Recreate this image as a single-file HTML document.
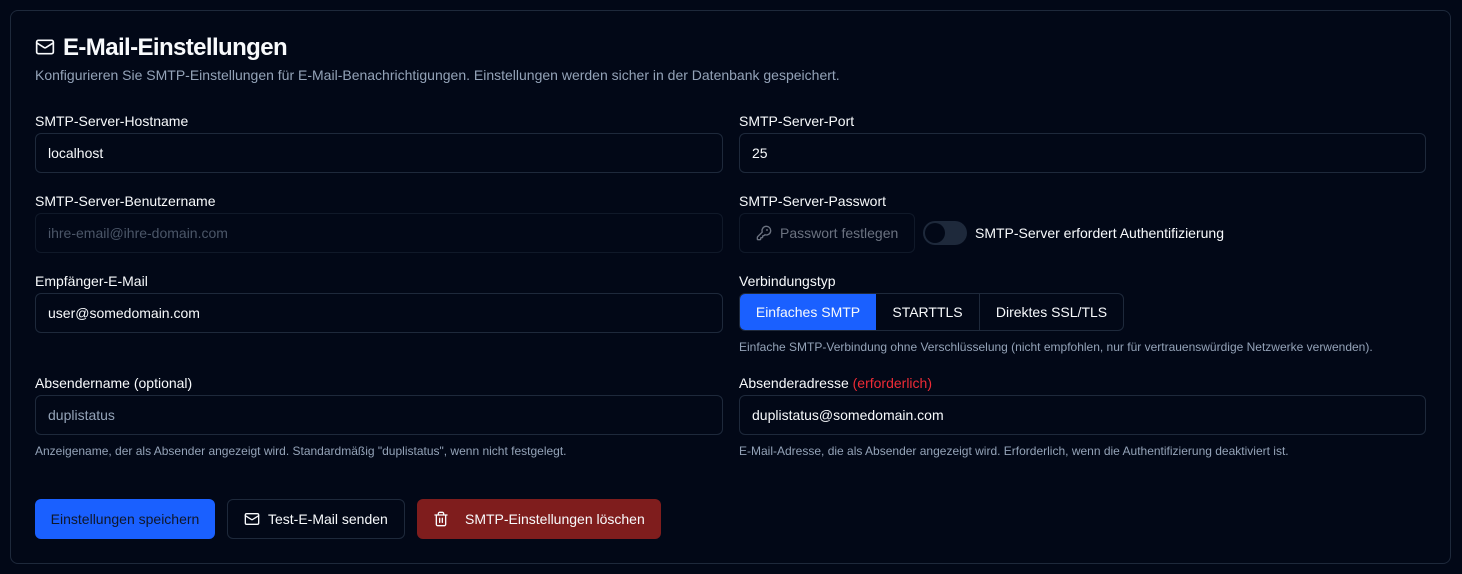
<!DOCTYPE html>
<html lang="de">
<head>
<meta charset="utf-8">
<title>E-Mail-Einstellungen</title>
<style>
*{box-sizing:border-box;margin:0;padding:0}
html,body{width:1462px;height:574px;background:#020817;overflow:hidden}
body{position:relative;font-family:"Liberation Sans",sans-serif;color:#f8fafc;font-size:14px;line-height:20px}
.a{position:absolute;white-space:nowrap}
.card{position:absolute;left:10px;top:10px;width:1441px;height:554px;border:1px solid #1e293b;border-radius:8px;background:#020817}
.in{position:absolute;height:40px;border:1px solid #1e293b;border-radius:6px;background:#020817;padding:9px 12px;white-space:nowrap}
.dis{border-color:#101929}
.w1{left:35px;width:688px}
.w2{left:739px;width:687px}
.h{font-size:12px;line-height:16px;color:#94a3b8}
.m{color:#94a3b8}
svg{position:absolute;fill:none;stroke:currentColor;stroke-width:2;stroke-linecap:round;stroke-linejoin:round}
.btn{position:absolute;top:499px;height:40px;border-radius:6px;text-align:center;line-height:40px;white-space:nowrap}
</style>
</head>
<body>
<div class="card"></div>

<svg style="left:35px;top:37px;color:#f8fafc" width="20" height="20" viewBox="0 0 24 24"><rect x="2" y="4" width="20" height="16" rx="2"/><path d="m22 7-8.97 5.7a1.94 1.94 0 0 1-2.06 0L2 7"/></svg>
<div class="a" style="left:63px;top:32px;font-size:24px;line-height:32px;font-weight:700;letter-spacing:-0.6px">E-Mail-Einstellungen</div>
<div class="a m" style="left:35px;top:65px">Konfigurieren Sie SMTP-Einstellungen für E-Mail-Benachrichtigungen. Einstellungen werden sicher in der Datenbank gespeichert.</div>

<div class="a" style="left:35px;top:111px">SMTP-Server-Hostname</div>
<div class="in w1" style="top:133px">localhost</div>
<div class="a" style="left:739px;top:111px">SMTP-Server-Port</div>
<div class="in w2" style="top:133px">25</div>

<div class="a" style="left:35px;top:191px">SMTP-Server-Benutzername</div>
<div class="in w1 dis" style="top:213px;color:#4b5668">ihre-email@ihre-domain.com</div>
<div class="a" style="left:739px;top:191px">SMTP-Server-Passwort</div>
<div class="in dis" style="left:739px;top:213px;width:176px"></div>
<svg style="left:756px;top:225px;color:#6b7280" width="16" height="16" viewBox="0 0 24 24"><path d="M2.586 17.414A2 2 0 0 0 2 18.828V21a1 1 0 0 0 1 1h3a1 1 0 0 0 1-1v-1a1 1 0 0 1 1-1h1a1 1 0 0 0 1-1v-1a1 1 0 0 1 1-1h.172a2 2 0 0 0 1.414-.586l.814-.814a6.5 6.5 0 1 0-4-4z"/><circle cx="16.5" cy="7.5" r=".5"/></svg>
<div class="a" style="left:780px;top:223px;color:#6b7280">Passwort festlegen</div>
<div class="a" style="left:923px;top:221px;width:44px;height:24px;border-radius:12px;background:#1e293b"></div>
<div class="a" style="left:925px;top:223px;width:20px;height:20px;border-radius:10px;background:#020817"></div>
<div class="a" style="left:975px;top:223px">SMTP-Server erfordert Authentifizierung</div>

<div class="a" style="left:35px;top:271px">Empfänger-E-Mail</div>
<div class="in w1" style="top:293px">user@somedomain.com</div>
<div class="a" style="left:739px;top:271px">Verbindungstyp</div>
<div class="a" style="left:739px;top:293px;width:385px;height:38px;border:1px solid #1e293b;border-radius:6px"></div>
<div class="a" style="left:740px;top:294px;width:136px;height:36px;background:#1a60ff;border-radius:5px 0 0 5px;text-align:center;line-height:36px">Einfaches SMTP</div>
<div class="a" style="left:876px;top:294px;width:103px;height:36px;text-align:center;line-height:36px">STARTTLS</div>
<div class="a" style="left:979px;top:294px;width:1px;height:36px;background:#1e293b"></div>
<div class="a" style="left:980px;top:294px;width:143px;height:36px;text-align:center;line-height:36px">Direktes SSL/TLS</div>
<div class="a h" style="left:739px;top:339px">Einfache SMTP-Verbindung ohne Verschlüsselung (nicht empfohlen, nur für vertrauenswürdige Netzwerke verwenden).</div>

<div class="a" style="left:35px;top:373px">Absendername (optional)</div>
<div class="in w1" style="top:395px;color:#94a3b8">duplistatus</div>
<div class="a h" style="left:35px;top:443px">Anzeigename, der als Absender angezeigt wird. Standardmäßig "duplistatus", wenn nicht festgelegt.</div>
<div class="a" style="left:739px;top:373px">Absenderadresse <span style="color:#ef2b36">(erforderlich)</span></div>
<div class="in w2" style="top:395px">duplistatus@somedomain.com</div>
<div class="a h" style="left:739px;top:443px">E-Mail-Adresse, die als Absender angezeigt wird. Erforderlich, wenn die Authentifizierung deaktiviert ist.</div>

<div class="btn" style="left:35px;width:180px;background:#1a60ff;color:#0f172a">Einstellungen speichern</div>
<div class="btn" style="left:227px;width:178px;border:1px solid #1e293b;line-height:38px;background:#020817"></div>
<svg style="left:244px;top:511px;color:#f8fafc" width="16" height="16" viewBox="0 0 24 24"><rect x="2" y="4" width="20" height="16" rx="2"/><path d="m22 7-8.97 5.7a1.94 1.94 0 0 1-2.06 0L2 7"/></svg>
<div class="a" style="left:268px;top:509px">Test-E-Mail senden</div>
<div class="btn" style="left:417px;width:244px;background:#7f1d1d"></div>
<svg style="left:433px;top:511px;color:#f8fafc" width="16" height="16" viewBox="0 0 24 24"><path d="M3 6h18"/><path d="M19 6v14c0 1-1 2-2 2H7c-1 0-2-1-2-2V6"/><path d="M8 6V4c0-1 1-2 2-2h4c1 0 2 1 2 2v2"/><line x1="10" y1="11" x2="10" y2="17"/><line x1="14" y1="11" x2="14" y2="17"/></svg>
<div class="a" style="left:465px;top:509px">SMTP-Einstellungen löschen</div>
</body>
</html>
